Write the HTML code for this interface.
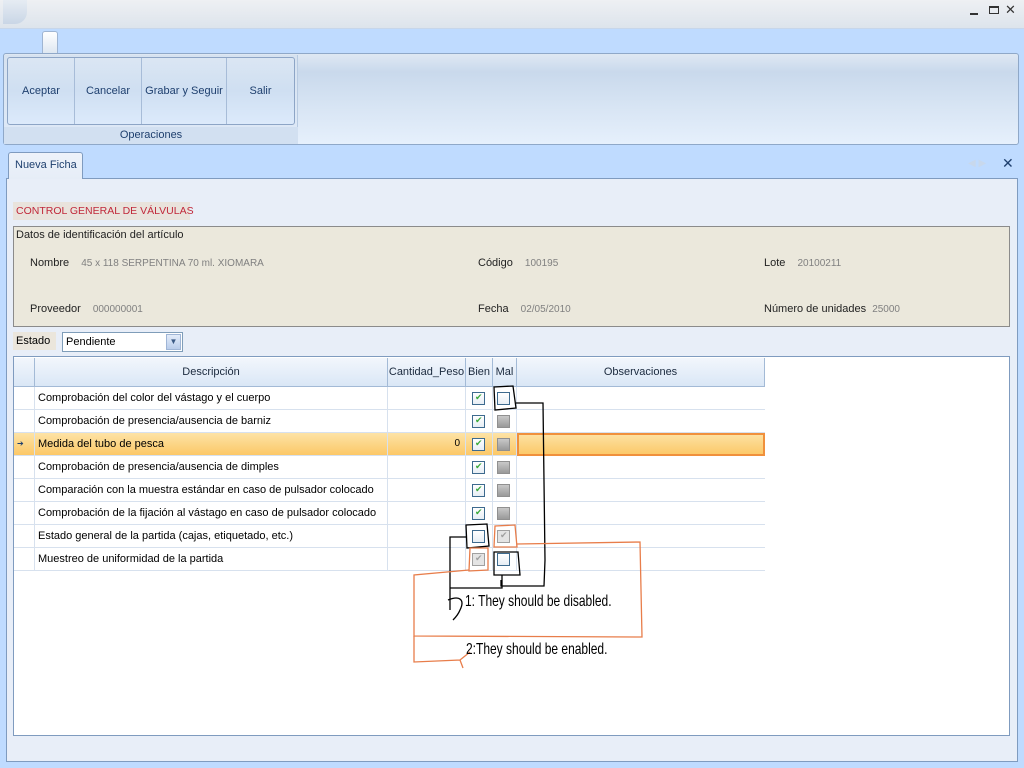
<!DOCTYPE html>
<html><head><meta charset="utf-8"><style>
*{margin:0;padding:0;box-sizing:border-box}
body{width:1024px;height:768px;position:relative;overflow:hidden;background:#bfdbff;font-family:"Liberation Sans",sans-serif;font-size:11px;color:#000}
.abs{position:absolute;white-space:nowrap}
.title{left:0;top:0;width:1024px;height:29px;background:linear-gradient(#eef0f3,#dde4ec);border-bottom:1px solid #c7d6ea}
.rib{left:3px;top:53px;width:1016px;height:92px;border:1px solid #8fa8c8;border-radius:3px;background:linear-gradient(#dfe8f3 0,#c9d9ec 20%,#d8e5f4 60%,#e6f0fc 100%)}
.grp{left:4px;top:55px;width:294px;height:89px;background:linear-gradient(#d6e2f0,#dfeaf8);border-right:1px solid #b8cbe2}
.btns{left:7px;top:57px;width:288px;height:68px;border:1px solid #8da5c6;border-radius:3px;background:linear-gradient(#dbe6f3,#cfdff2 50%,#dceafb)}
.btn{position:absolute;top:0;height:66px;line-height:66px;text-align:center;color:#1e3f6e;font-size:11px;border-right:1px solid #a7bcd8}
.ops{left:4px;top:127px;width:294px;height:17px;text-align:center;color:#1e3f6e;line-height:17px;background:#d2e0f1}
.panel{left:6px;top:178px;width:1012px;height:584px;background:#e8eef8;border:1px solid #7f9bbf}
.tab{left:8px;top:152px;width:75px;height:27px;background:linear-gradient(#eef3fa,#e6edf7);border:1px solid #7f9bbf;border-bottom:none;border-radius:3px 3px 0 0;color:#1e3f6e;line-height:25px;padding-left:6px}
.info{left:13px;top:226px;width:997px;height:101px;background:#ebe8dc;border:1px solid #8b8b8b}
.lbl{color:#222}
.val{color:#808080;font-size:10px}
.grid{left:13px;top:356px;width:997px;height:380px;background:#fff;border:1px solid #7f9bbf}
.hd{position:absolute;top:1px;height:29px;line-height:29px;text-align:center;background:linear-gradient(#f2f6fc,#dae7f6);border-right:1px solid #a3bad6;border-bottom:1px solid #a3bad6;color:#1b2a3e}
.row{position:absolute;left:0;width:751px;height:23px;border-bottom:1px solid #d7e1ee}
.c{position:absolute;top:0;height:23px;line-height:22px;border-right:1px solid #d7e1ee;padding-left:3px;white-space:nowrap}
.cb{position:absolute;width:13px;height:13px;border:1px solid #3d6a8e;background:linear-gradient(#fff,#e7eef5)}
.cb.on::after{content:"✔";position:absolute;left:2px;top:-1px;color:#3aa83a;font-size:9px}
.cb.dis{border-color:#909090;background:linear-gradient(#c8c8c8,#9a9a9a)}
.cb.gon{border-color:#a0a0a0;background:#e4e4e4}
.cb.gon::after{content:"✔";position:absolute;left:2px;top:-1px;color:#a0a0a0;font-size:9px}
</style></head><body>
<div class="abs title"></div>
<div class="abs" style="left:3px;top:0;width:24px;height:24px;border-radius:0 0 12px 0;background:linear-gradient(#e6ecf3,#c9d6e6)"></div>
<div class="abs" style="left:970px;top:13px;width:8px;height:2px;background:#333"></div>
<div class="abs" style="left:989px;top:6px;width:10px;height:8px;border:1px solid #333;border-top-width:2px"></div>
<div class="abs" style="left:1005px;top:2px;font-size:13px;color:#333">✕</div>
<div class="abs" style="left:42px;top:31px;width:16px;height:23px;background:linear-gradient(#fff,#dce6f1);border:1px solid #9fb5d2;border-bottom:none;border-radius:3px 3px 0 0"></div>
<div class="abs rib"></div>
<div class="abs grp"></div>
<div class="abs btns">
<div class="btn" style="left:0;width:67px">Aceptar</div>
<div class="btn" style="left:67px;width:67px">Cancelar</div>
<div class="btn" style="left:134px;width:85px">Grabar y Seguir</div>
<div class="btn" style="left:219px;width:67px;border:none">Salir</div>
</div>
<div class="abs ops">Operaciones</div>
<div class="abs panel"></div>
<div class="abs tab">Nueva Ficha</div>
<div class="abs" style="left:968px;top:158px;color:#c8d8ec;font-size:10px">◀ ▶</div>
<div class="abs" style="left:1002px;top:155px;font-size:14px;color:#1e3f6e">✕</div>
<div class="abs" style="left:13px;top:202px;width:177px;height:18px;background:#e9e3dc;color:#c0283a;line-height:18px;padding-left:3px;font-size:10.5px">CONTROL GENERAL DE VÁLVULAS</div>
<div class="abs info">
<div class="abs lbl" style="left:2px;top:2px">Datos de identificación del artículo</div>
<div class="abs lbl" style="left:16px;top:30px">Nombre <span class="val" style="margin-left:9px">45 x 118 SERPENTINA 70 ml. XIOMARA</span></div>
<div class="abs lbl" style="left:16px;top:76px">Proveedor <span class="val" style="margin-left:9px">000000001</span></div>
<div class="abs lbl" style="left:464px;top:30px">Código <span class="val" style="margin-left:9px">100195</span></div>
<div class="abs lbl" style="left:464px;top:76px">Fecha <span class="val" style="margin-left:9px">02/05/2010</span></div>
<div class="abs lbl" style="left:750px;top:30px">Lote <span class="val" style="margin-left:9px">20100211</span></div>
<div class="abs lbl" style="left:750px;top:76px">Número de unidades <span class="val" style="margin-left:3px">25000</span></div>
</div>
<div class="abs" style="left:13px;top:332px;width:43px;height:18px;background:#ebe6dc;line-height:18px;padding-left:3px">Estado</div>
<div class="abs" style="left:62px;top:332px;width:121px;height:20px;background:#fff;border:1px solid #7f9db9;line-height:18px;padding-left:3px;font-size:11px">Pendiente<div class="abs" style="right:1px;top:1px;width:15px;height:16px;background:linear-gradient(#e3ecfa,#b9cdeb);border:1px solid #9fb5d6;color:#3b5a85;font-size:8px;text-align:center;line-height:14px">▼</div></div>
<div class="abs grid">
<div class="hd" style="left:0;width:21px"></div>
<div class="hd" style="left:21px;width:353px">Descripción</div>
<div class="hd" style="left:374px;width:78px">Cantidad_Peso</div>
<div class="hd" style="left:452px;width:27px">Bien</div>
<div class="hd" style="left:479px;width:24px">Mal</div>
<div class="hd" style="left:503px;width:248px">Observaciones</div>
</div>
<div class="abs" style="left:14px;top:387px">
<div class="row" style="top:0"><div class="c" style="left:0;width:21px"></div><div class="c" style="left:21px;width:353px">Comprobación del color del vástago y el cuerpo</div><div class="c" style="left:374px;width:78px"></div><div class="c" style="left:452px;width:27px"></div><div class="c" style="left:479px;width:24px"></div></div>
<div class="row" style="top:23px"><div class="c" style="left:0;width:21px"></div><div class="c" style="left:21px;width:353px">Comprobación de presencia/ausencia de barniz</div><div class="c" style="left:374px;width:78px"></div><div class="c" style="left:452px;width:27px"></div><div class="c" style="left:479px;width:24px"></div></div>
<div class="row" style="top:46px;background:linear-gradient(#fde3a6,#fcc867)"><div class="c" style="left:0;width:21px;font-size:8px;color:#1e3f6e">➔</div><div class="c" style="left:21px;width:353px">Medida del tubo de pesca</div><div class="c" style="left:374px;width:78px;text-align:right;padding-right:5px;font-size:10px">0</div><div class="c" style="left:452px;width:27px"></div><div class="c" style="left:479px;width:24px"></div><div class="c" style="left:503px;width:248px;border:2px solid #f0903c;height:23px"></div></div>
<div class="row" style="top:69px"><div class="c" style="left:0;width:21px"></div><div class="c" style="left:21px;width:353px">Comprobación de presencia/ausencia de dimples</div><div class="c" style="left:374px;width:78px"></div><div class="c" style="left:452px;width:27px"></div><div class="c" style="left:479px;width:24px"></div></div>
<div class="row" style="top:92px"><div class="c" style="left:0;width:21px"></div><div class="c" style="left:21px;width:353px">Comparación con la muestra estándar en caso de pulsador colocado</div><div class="c" style="left:374px;width:78px"></div><div class="c" style="left:452px;width:27px"></div><div class="c" style="left:479px;width:24px"></div></div>
<div class="row" style="top:115px"><div class="c" style="left:0;width:21px"></div><div class="c" style="left:21px;width:353px">Comprobación de la fijación al vástago en caso de pulsador colocado</div><div class="c" style="left:374px;width:78px"></div><div class="c" style="left:452px;width:27px"></div><div class="c" style="left:479px;width:24px"></div></div>
<div class="row" style="top:138px"><div class="c" style="left:0;width:21px"></div><div class="c" style="left:21px;width:353px">Estado general de la partida (cajas, etiquetado, etc.)</div><div class="c" style="left:374px;width:78px"></div><div class="c" style="left:452px;width:27px"></div><div class="c" style="left:479px;width:24px"></div></div>
<div class="row" style="top:161px"><div class="c" style="left:0;width:21px"></div><div class="c" style="left:21px;width:353px">Muestreo de uniformidad de la partida</div><div class="c" style="left:374px;width:78px"></div><div class="c" style="left:452px;width:27px"></div><div class="c" style="left:479px;width:24px"></div></div>
</div>
<div class="cb on abs" style="left:472px;top:392px"></div><div class="cb abs" style="left:497px;top:392px"></div>
<div class="cb on abs" style="left:472px;top:415px"></div><div class="cb dis abs" style="left:497px;top:415px"></div>
<div class="cb on abs" style="left:472px;top:438px"></div><div class="cb dis abs" style="left:497px;top:438px"></div>
<div class="cb on abs" style="left:472px;top:461px"></div><div class="cb dis abs" style="left:497px;top:461px"></div>
<div class="cb on abs" style="left:472px;top:484px"></div><div class="cb dis abs" style="left:497px;top:484px"></div>
<div class="cb on abs" style="left:472px;top:507px"></div><div class="cb dis abs" style="left:497px;top:507px"></div>
<div class="cb abs" style="left:472px;top:530px"></div><div class="cb gon abs" style="left:497px;top:530px"></div>
<div class="cb gon abs" style="left:472px;top:553px"></div><div class="cb abs" style="left:497px;top:553px"></div>
<svg class="abs" style="left:0;top:0" width="1024" height="768" fill="none" stroke-width="1.3">
<g stroke="#000">
<path d="M494 387 L513 386 L516 408 L495 410 Z"/>
<path d="M516 403 L543 403 L545 560 L544 586 L501 586 L501 580"/>
<path d="M466 525 L487 524 L489 546 L467 548 Z"/>
<path d="M466 537 L450 537 L450 610"/>
<path d="M494 552 L518 552 L520 575 L494 575 Z"/>
<path d="M502 575 L502 588 L450 588"/>
<path d="M448 600 C460 595 465 600 460 610 C458 615 455 618 453 620"/>
</g>
<g stroke="#e87d4a">
<path d="M495 526 L515 525 L517 547 L494 547 Z"/>
<path d="M470 548 L488 548 L488 570 L469 571 Z"/>
<path d="M517 544 L640 542 L642 637 L414 636 L414 575 L469 570"/>
<path d="M414 636 L414 662 L460 660 L470 652 M460 660 L463 668"/>
</g>
</svg>
<div class="abs" style="left:465px;top:593px;font-family:'Liberation Sans Narrow','Liberation Sans',sans-serif;font-size:16px;transform:scaleX(0.75);transform-origin:left;white-space:nowrap">1: They should be disabled.</div>
<div class="abs" style="left:466px;top:641px;font-family:'Liberation Sans Narrow','Liberation Sans',sans-serif;font-size:16px;transform:scaleX(0.75);transform-origin:left;white-space:nowrap">2:They should be enabled.</div>
</body></html>
